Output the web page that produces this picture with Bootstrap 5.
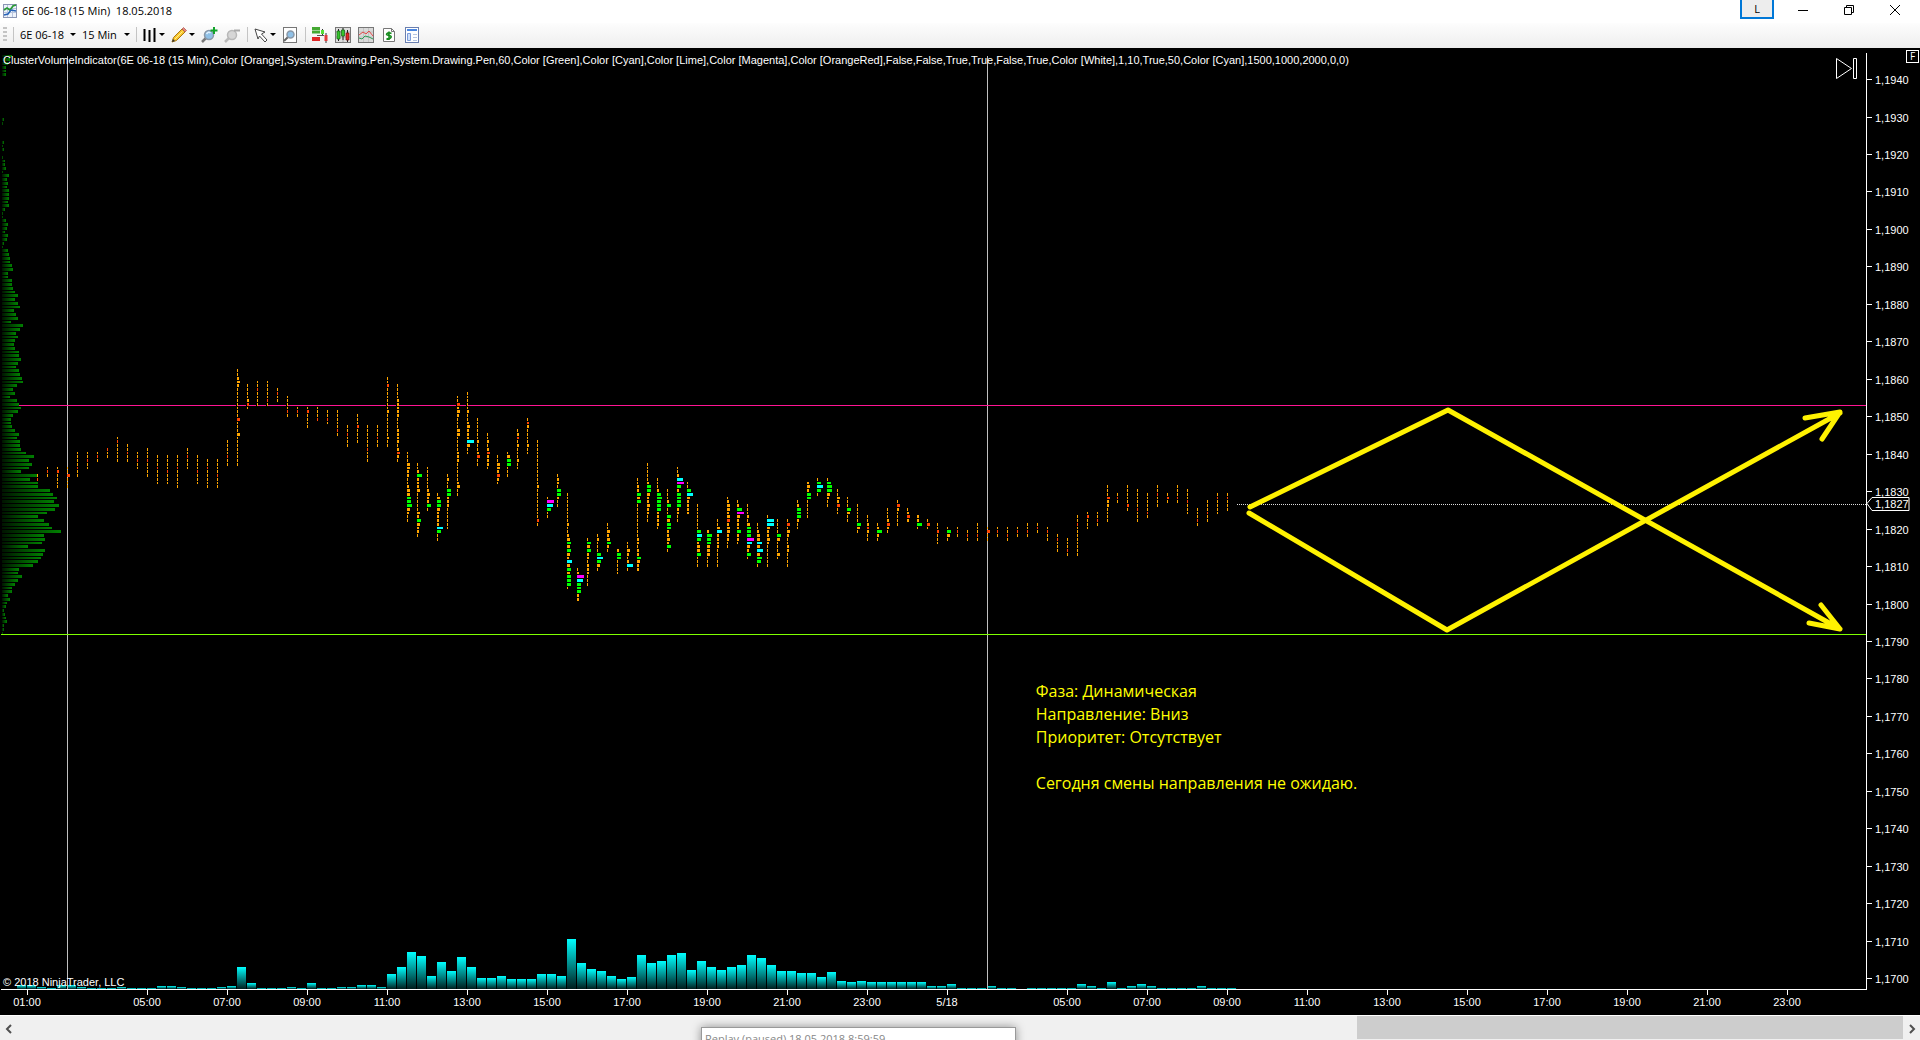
<!DOCTYPE html>
<html lang="ru">
<head>
<meta charset="utf-8">
<meta name="viewport" content="width=device-width, initial-scale=1">
<title>6E 06-18 (15 Min) 18.05.2018</title>
<link href="https://cdn.jsdelivr.net/npm/bootstrap@5.3.0/dist/css/bootstrap.min.css" rel="stylesheet">
<style>
  body { font: 12px/16px "Noto Sans", "Open Sans", sans-serif; color: #000; background: #fff; overflow: hidden; }
  button { border: 0; background: none; padding: 0; color: inherit; font: inherit; }
  .ui-text { font: 11px/16px "Open Sans", "Noto Sans", sans-serif; white-space: pre; }
  .title-strip { height: 23px; padding-left: 3px; }
  .title-strip h1 { margin: 0; padding-top: 3px; }
  .title-icon { margin: 4px 5px 0 0; }
  .layout-btn { width: 34px; height: 19px; border: 2px solid #0078d7; border-top: 0; background: #ededed; margin-right: 6px; }
  .win-btns { padding-right: 2px; }
  .win-btn { width: 46px; height: 20px; }
  .tool-strip { height: 25px; gap: 6px; padding: 0 0 2px 3px; background: linear-gradient(#fdfdfd, #eeeeee); }
  .grip { width: 4px; height: 16px; background: repeating-linear-gradient(#c4c4c4 0 2px, transparent 2px 4px); }
  .sep { width: 1px; height: 15px; background: #c4c4c4; }
  .tool { width: 17px; height: 18px; display: flex; align-items: center; justify-content: space-between; }
  .tool-drop { width: 22px; }
  .tool-pair { width: 24px; }
  .tool-symbol { width: 56px; }
  .tool-period { width: 48px; }
  .caret { border: 3px solid transparent; border-top-color: #000; border-bottom: 0; width: 6px; height: 3px; }
  .chart-area { background: #000; height: 967px; }
  .chart-area svg { font: 11px "Liberation Sans", sans-serif; }
  .chart-head { left: 3px; top: 5px; color: #fff; font: 11px/14px "Liberation Sans", sans-serif; }
  .fixed-box { right: 1px; top: 2px; width: 13px; height: 13px; border: 1px solid #fff; color: #fff; font: 10px/11px "Open Sans", sans-serif; }
  .note { left: 54%; margin-left: -1px; top: 632px; color: #ff0; font: 16px/23px "Open Sans", "Noto Sans", sans-serif; }
  .hscroll { border-top: 1px solid #fff; background: #f0f0f0; height: 25px; }
  .hscroll button { width: 17px; height: 24px; }
  .thumb { width: 546px; height: 23px; background: #cdcdcd; }
  .replay { left: 701px; top: 11px; width: 315px; height: 34px; padding: 3px; background: #fff; border: 1px solid #999; box-shadow: 0 0 9px rgba(0,0,0,.4); color: #888; }
</style>
<script src="https://cdn.jsdelivr.net/npm/bootstrap@5.3.0/dist/js/bootstrap.bundle.min.js"></script>
</head>
<body class="d-flex flex-column min-vh-100">

<header class="title-strip d-flex align-items-start">
  <svg class="title-icon" width="14" height="14" viewBox="0 0 14 14">
    <rect x=".5" y=".5" width="13" height="13" fill="#eef3fb" stroke="#8c97b5"/>
    <path d="M1 4.500h12M1 8.500h12M4.500 1v12M9.500 1v12" stroke="#b9c5de"/>
    <path d="M1 6l3-2 3 2 3-4 3-1" fill="none" stroke="#2b9c35" stroke-width="1.700"/>
    <path d="M1 11l4-1 3-4 5 1" fill="none" stroke="#2663b8" stroke-width="1.500"/>
  </svg>
  <h1 class="ui-text me-auto">6E 06-18 (15 Min)  18.05.2018</h1>
  <button class="layout-btn ui-text" type="button">L</button>
  <div class="win-btns d-flex">
    <button class="win-btn" type="button" aria-label="Minimize"><svg class="d-block mx-auto" width="12" height="12"><path d="M1 6.500h10" stroke="#000"/></svg></button>
    <button class="win-btn" type="button" aria-label="Restore"><svg class="d-block mx-auto" width="12" height="12"><path d="M1.500 3.500h7v7h-7zM3.500 3V1.500h7v7H9" fill="none" stroke="#000"/></svg></button>
    <button class="win-btn" type="button" aria-label="Close"><svg class="d-block mx-auto" width="12" height="12"><path d="M1 1l10 10M11 1L1 11" stroke="#000"/></svg></button>
  </div>
</header>

<nav class="tool-strip d-flex align-items-center" aria-label="Chart tools">
  <span class="grip"></span><span class="sep"></span>
  <button class="tool tool-symbol ui-text" type="button">6E 06-18<span class="caret"></span></button>
  <button class="tool tool-period ui-text" type="button">15 Min<span class="caret"></span></button>
  <span class="sep"></span>
  <button class="tool tool-drop" type="button" aria-label="Bar style"><svg width="13" height="16"><path d="M1.500 2v12M6.500 3v12M11.500 1v14" stroke="#000" stroke-width="2"/></svg><span class="caret"></span></button>
  <button class="tool tool-pair" type="button" aria-label="Draw"><svg width="16" height="16"><path d="M1 15l1.500-4.500L11 2l3 3-8.500 8.500z" fill="#f8c62c" stroke="#a87714"/><path d="M11 2l1.500-1.500 3 3L14 5z" fill="#e8877d" stroke="#a8554d" stroke-width=".7"/><path d="M1 15l1-3 2 2z" fill="#333"/><path d="M4 12l7.500-7.500" stroke="#fff08a"/></svg><span class="caret"></span></button>
  <button class="tool" type="button" aria-label="Zoom in"><svg width="17" height="16"><path d="M5 11l-4 4" stroke="#777" stroke-width="2.500"/><circle cx="8" cy="8" r="4.500" fill="#8fc0e6" stroke="#8a98a8" stroke-width="1.500"/><path d="M5.500 7q2-3 4-1" stroke="#dff1ff" fill="none" stroke-width="1.500"/><path d="M13 0v7M9.500 3.500h7" stroke="#12a32b" stroke-width="2"/></svg></button>
  <button class="tool" type="button" aria-label="Zoom out"><svg width="17" height="16"><path d="M5 11l-4 4" stroke="#bbb" stroke-width="2.500"/><circle cx="8" cy="8" r="4.500" fill="#d6d6d6" stroke="#b8b8b8" stroke-width="1.500"/><path d="M10 3.500h6" stroke="#aaa" stroke-width="2"/></svg></button>
  <span class="sep"></span>
  <button class="tool tool-drop" type="button" aria-label="Pointer"><svg width="14" height="16"><path d="M1 2l10 3-3.500 2 5.500 6-2 2-5.500-6L4 12z" fill="#fff" stroke="#444"/></svg><span class="caret"></span></button>
  <button class="tool" type="button" aria-label="Data box"><svg width="16" height="16"><rect x="1.500" y=".5" width="13" height="15" fill="#fff" stroke="#777"/><path d="M6 10l-4 4" stroke="#666" stroke-width="2"/><circle cx="8.500" cy="7.500" r="3.500" fill="#8fc0e6" stroke="#8a98a8" stroke-width="1.500"/></svg></button>
  <span class="sep"></span>
  <button class="tool" type="button" aria-label="Chart trader"><svg width="16" height="16"><path d="M0 1.500h8M0 5h8" stroke="#44a832" stroke-width="3"/><path d="M0 12h8" stroke="#df2727" stroke-width="4"/><path d="M10.500 2v6M14 6v10" stroke="#333"/><path d="M9 3h3v4H9z" fill="#54df35"/><path d="M12.500 8h3v6h-3z" fill="#e33b3b"/><path d="M5 8.500h7" stroke="#555"/></svg></button>
  <button class="tool" type="button" aria-label="Data series"><svg width="16" height="16"><rect x=".5" y=".5" width="15" height="15" fill="#ddd" stroke="#777"/><path d="M1 5h14M1 10h14M8 1v14" stroke="#aaa"/><path d="M3.500 2v12M8 1v12M12.500 3v12" stroke="#222"/><path d="M2 4h3v8H2zM6.500 3h3v6h-3z" fill="#35c52c" stroke="#165e12" stroke-width=".7"/><path d="M11 6h3v7h-3z" fill="#df2727" stroke="#7a1010" stroke-width=".7"/></svg></button>
  <button class="tool" type="button" aria-label="Indicators"><svg width="16" height="16"><rect x=".5" y=".5" width="15" height="15" fill="#d9d9d9" stroke="#777"/><path d="M1 5h14M1 10h14M5.500 1v14M10.500 1v14" stroke="#c2c2c2"/><path d="M1 8l4-3 3 2 3-3 4 5" fill="none" stroke="#e34848"/><path d="M1 11l3 1 3-3 4 1 4 2" fill="none" stroke="#2b9a55"/></svg></button>
  <button class="tool" type="button" aria-label="Strategies"><svg width="16" height="16"><path d="M2.500 1.500h8l3 3v10h-11z" fill="#fff" stroke="#777"/><path d="M10.500 1.500v3h3" fill="none" stroke="#777"/><path d="M10.500 6.500q-3-1.500-4.500 0t2 2 1.500 2.500-4 .5M8 4.500v8.500" fill="none" stroke="#148a1c" stroke-width="1.600"/></svg></button>
  <button class="tool" type="button" aria-label="Properties"><svg width="16" height="16"><rect x="1.500" y=".5" width="13" height="15" fill="#fff" stroke="#6a7fb0"/><path d="M3 3h10" stroke="#4a86e0" stroke-width="2"/><path d="M3.500 6.500h3v7h-3z" fill="#cfe0fa" stroke="#7a9ad8"/><path d="M9 7.500h4M9 10.500h4M9 13.500h4" stroke="#b5c4e0"/></svg></button>
</nav>

<main class="chart-area position-relative">
  <svg id="chart" class="d-block w-100 h-100" role="img" aria-label="6E 06-18 cluster volume chart"></svg>
  <div class="chart-head position-absolute text-nowrap">ClusterVolumeIndicator(6E 06-18 (15 Min),Color [Orange],System.Drawing.Pen,System.Drawing.Pen,60,Color [Green],Color [Cyan],Color [Lime],Color [Magenta],Color [OrangeRed],False,False,True,True,False,True,Color [White],1,10,True,50,Color [Cyan],1500,1000,2000,0,0)</div>
  <button class="fixed-box position-absolute text-center" type="button">F</button>
  <div class="note position-absolute text-nowrap">Фаза: Динамическая<br>Направление: Вниз<br>Приоритет: Отсутствует<br><br>Сегодня смены направления не ожидаю.</div>
</main>

<footer class="hscroll position-relative overflow-hidden d-flex align-items-start">
  <button type="button" class="me-auto" aria-label="Scroll left"><svg width="8" height="10"><path d="M6 1L2 5l4 4" fill="none" stroke="#505050" stroke-width="2"/></svg></button>
  <div class="thumb"></div>
  <button type="button" aria-label="Scroll right"><svg width="8" height="10"><path d="M2 1l4 4-4 4" fill="none" stroke="#505050" stroke-width="2"/></svg></button>
  <div class="replay ui-text position-absolute">Replay (paused) 18.05.2018 8:59:59</div>
</footer>

<script>
// Row 0 is the price 1,1853; every row below it is one pip lower.
const PIP = 3.746, ROW0 = 355, LINE0 = 357.500, BASE = 941, AXIS = 54;
const rowTop = r => Math.round(ROW0 + r * PIP);
const lineY = p => Math.floor(LINE0 + (1853 - p) * PIP) + 0.5;

// Cell codes: [width, colour]
const CELL = {
  '.': [1, '#ffa500'], a: [2, '#ffa500'], b: [3, '#ffa500'],
  r: [1, '#ff4500'], s: [2, '#ff4500'], R: [3, '#ff4500'],
  g: [4, '#0f0'], G: [5, '#0f0'], k: [5, '#0ff'], c: [6, '#0ff'], C: [7, '#0ff'], M: [7, '#f0f']
};
// One entry per 15 minute bar: first row and the cells from top to bottom
const bars = `19 .r|17 .r.|17 .s....|17 ..R...|13 ....r..|13 ..r..|13 .r.|12 r..|9 .r.....|11 ..r..|13 ..r..|12 ...r....|14 ...r....|14 ....r...|14 ...r.....|12 ..r...|14 ....r...
15 ..r.....|15 ....r...|10 ....r..|-9 ..aba........R...b........|-5 ....as.|-6 ..r....|-6 .....r.|-4 .r..|-2 ....r.|1 .r.|1 .s....|1 ...r|2 ..r.|2 .....r.|6 ..r...|3 ...s....|6 ......r...|6 ...r..
-7 ..s......a......a..|-5 ....aaaaa...aaaa.aRa.|13 ...bbaa..abbggGba..|16 ..aGaaab.....bagbaa.|17 ......abaag.|24 .bggbaaaacg..|19 .a..ggaaa......|-2 ..Raba...bb....aaa.....ab..|-3 .....a..abaaaCb..|4 ......a..aR..|8 ..a.aRaaa.|14 ..bbaRa.|13 .bgg...|7 .as.a...a..|4 .sa....a..|10 ............a........s.|25 .Mcg..|19 .aa.gga..
24 ........a..abgbgbakbgbggg.|44 .aMcgggaa|36 .gbgaa.aaa...|35 .a...gcgb.|32 ..babga.|39 agg....|37 ..ba.ac.|20 ..aagbg.........aa.aagbaa|16 .....aggbaabaa..|20 ...agGgggaaaa.|23 ...ag..gbggaabag.|17 ..acMgaggggaa..|21 ..gcbaaaa|27 .......gkgabbg...|34 aGggbbb...|31 ..bkaaaa.....|25 .abbabRabbaa..|26 .aGMbaaagaa.|27 ...a.bgggMkbag.|32 ..abbkbcbGg.|30 .CCbaaba......|31 ....gb...b.|31 .R.ba..aa....|26 .aggga..|21 abagg.....|20 .gcg.|20 .gGGba..|23 ..baR..|25 ...gb..|27 .....gb.|30 ..asa..|32 .aGa.|28 ...aRa.|26 .Ra....|28 .aRa|30 aaG.|31 .R.|32 ..s...|33 .gb.|33 .r.
34 .r.|32 ...r.|33 .R..|33 .r.|33 ..r.|33 .r.|32 ..r.|32 .r.|33 .r..|35 .r...|36 ...r.|30 ..r........|29 .s...|29 ..r.|22 ...Raa....|24 .r.|22 .....s.|23 .....r...|24 .....r.|22 ..r...|24 .s.|22 ...r.|23 ...r...|28 ...r.|26 ...r..|24 .r....|24 .r...`.split(/[|\n]/);

const profileStart = -93;
const profile = [10,8,6,4,4,4,0,0,0,0,0,0,0,0,0,0,0,2,1,0,0,0,0,2,1,2,0,1,3,3,4,1,7,5,6,5,7,7,7,6,7,3,1,1,4,6,5,3,6,5,2,1,6,7,8,8,10,11,6,6,10,10,11,13,16,13,16,18,12,14,16,9,21,18,14,16,13,12,13,17,17,19,16,14,17,18,20,21,15,11,13,8,15,
  17,19,16,11,9,9,10,13,17,15,18,18,19,24,32,27,30,27,19,36,28,36,36,48,51,55,52,57,53,45,36,42,47,50,59,42,43,40,26,43,41,39,36,31,17,16,20,16,13,10,10,6,8,5,4,2,3,4,5,2,2,1];

const volume = [4,4,2,1,4,4,2,1,1,1,2,1,1,1,3,3,2,1,1,1,2,3,22,6,1,1,1,2,1,6,1,1,2,2,4,4,2,15,22,37,33,13,27,18,32,22,11,11,13,10,10,10,15,15,13,50,26,20,18,13,10,12,34,26,28,34,36,19,28,22,19,22,24,34,31,24,18,18,16,16,12,17,8,7,8,7,7,7,7,7,7,3,3,5,1,1,1,3,1,1,0,1,1,1,1,1,5,3,1,7,1,3,5,3,1,1,1,1,3,1,1,1];

const times = {27:'01:00',147:'05:00',227:'07:00',307:'09:00',387:'11:00',467:'13:00',547:'15:00',627:'17:00',707:'19:00',787:'21:00',867:'23:00',947:'5/18',1067:'05:00',1147:'07:00',1227:'09:00',1307:'11:00',1387:'13:00',1467:'15:00',1547:'17:00',1627:'19:00',1707:'21:00',1787:'23:00'};

function draw() {
  const svg = document.getElementById('chart');
  const ax = svg.clientWidth - AXIS;
  const rect = (x, y, w, h, f) => `<rect x="${x}" y="${y}" width="${w}" height="${h}" fill="${f}"/>`;
  let out = `<defs><linearGradient id="gp"><stop stop-color="#001400"/><stop offset="1" stop-color="#008000"/></linearGradient>
    <linearGradient id="gv" x2="0" y2="1"><stop stop-color="#0ff"/><stop offset="1" stop-color="#001c1c"/></linearGradient></defs>`;
  profile.forEach((w, i) => { const t = rowTop(profileStart + i); if (w) out += rect(2, t, w, rowTop(profileStart + i + 1) - t - 1, 'url(#gp)'); });
  volume.forEach((h, i) => { if (h) out += rect(17 + i * 10, BASE - h, 9, h, h > 1 ? 'url(#gv)' : '#00b4b4'); });
  out += rect(67, 8, 1, BASE - 8, '#c0c0c0') + rect(987, 8, 1, BASE - 8, '#c0c0c0');
  out += rect(19, 357, ax - 19, 1, '#ff1493') + rect(1, 586, ax - 1, 1, '#7fff00');
  bars.forEach((b, i) => {
    const [start, cells] = b.split(' '), x = 37 + i * 10;
    [...cells].forEach((c, j) => {
      const r = +start + j, t = rowTop(r);
      if (r === 0) out += rect(x - 1, 357, 1, 1, '#000');
      out += rect(x, t, CELL[c][0], rowTop(r + 1) - t - 1, CELL[c][1]);
    });
  });
  out += `<path d="M1237 456.500H${ax}" stroke="#ddd" stroke-dasharray="1 1"/>`;
  // Axes with their ticks and labels
  out += rect(ax, 5, 1, BASE - 4, '#fff') + rect(1, BASE, ax, 1, '#fff');
  for (let p = 1940; p >= 1700; p -= 10) {
    const y = lineY(p);
    out += `<path d="M${ax} ${y}h6" stroke="#fff"/><text x="${ax + 9}" y="${y + 4}" fill="#fff">1,${p}</text>`;
  }
  for (const x in times) out += rect(x, BASE, 1, 6, '#fff') + `<text x="${x}" y="958" text-anchor="middle" fill="#fff">${times[x]}</text>`;
  out += `<path d="M${ax + 1} 455.500l5-6h37v13h-37z" fill="#000" stroke="#fff"/><text x="${ax + 9}" y="460" fill="#fff">1,1827</text>`;
  out += `<text x="3" y="938" fill="#fff">© 2018 NinjaTrader, LLC</text>`;
  out += `<path d="M${ax - 29.500} 10.500v20l15-10zM${ax - 12.500} 10.500h3v20h-3z" fill="none" stroke="#fff"/>`;
  // Hand-drawn scenarios
  out += `<g fill="none" stroke="#fff200" stroke-width="5" stroke-linecap="round" stroke-linejoin="round">
    <path d="M1250 459L1448 362L1840 581M1809 575L1840 581L1821 557"/>
    <path d="M1249 465L1447 582L1840 365M1805 370L1840 364L1822 391"/></g>`;
  svg.innerHTML = out;
}
draw();
addEventListener('resize', draw);
</script>
</body>
</html>
